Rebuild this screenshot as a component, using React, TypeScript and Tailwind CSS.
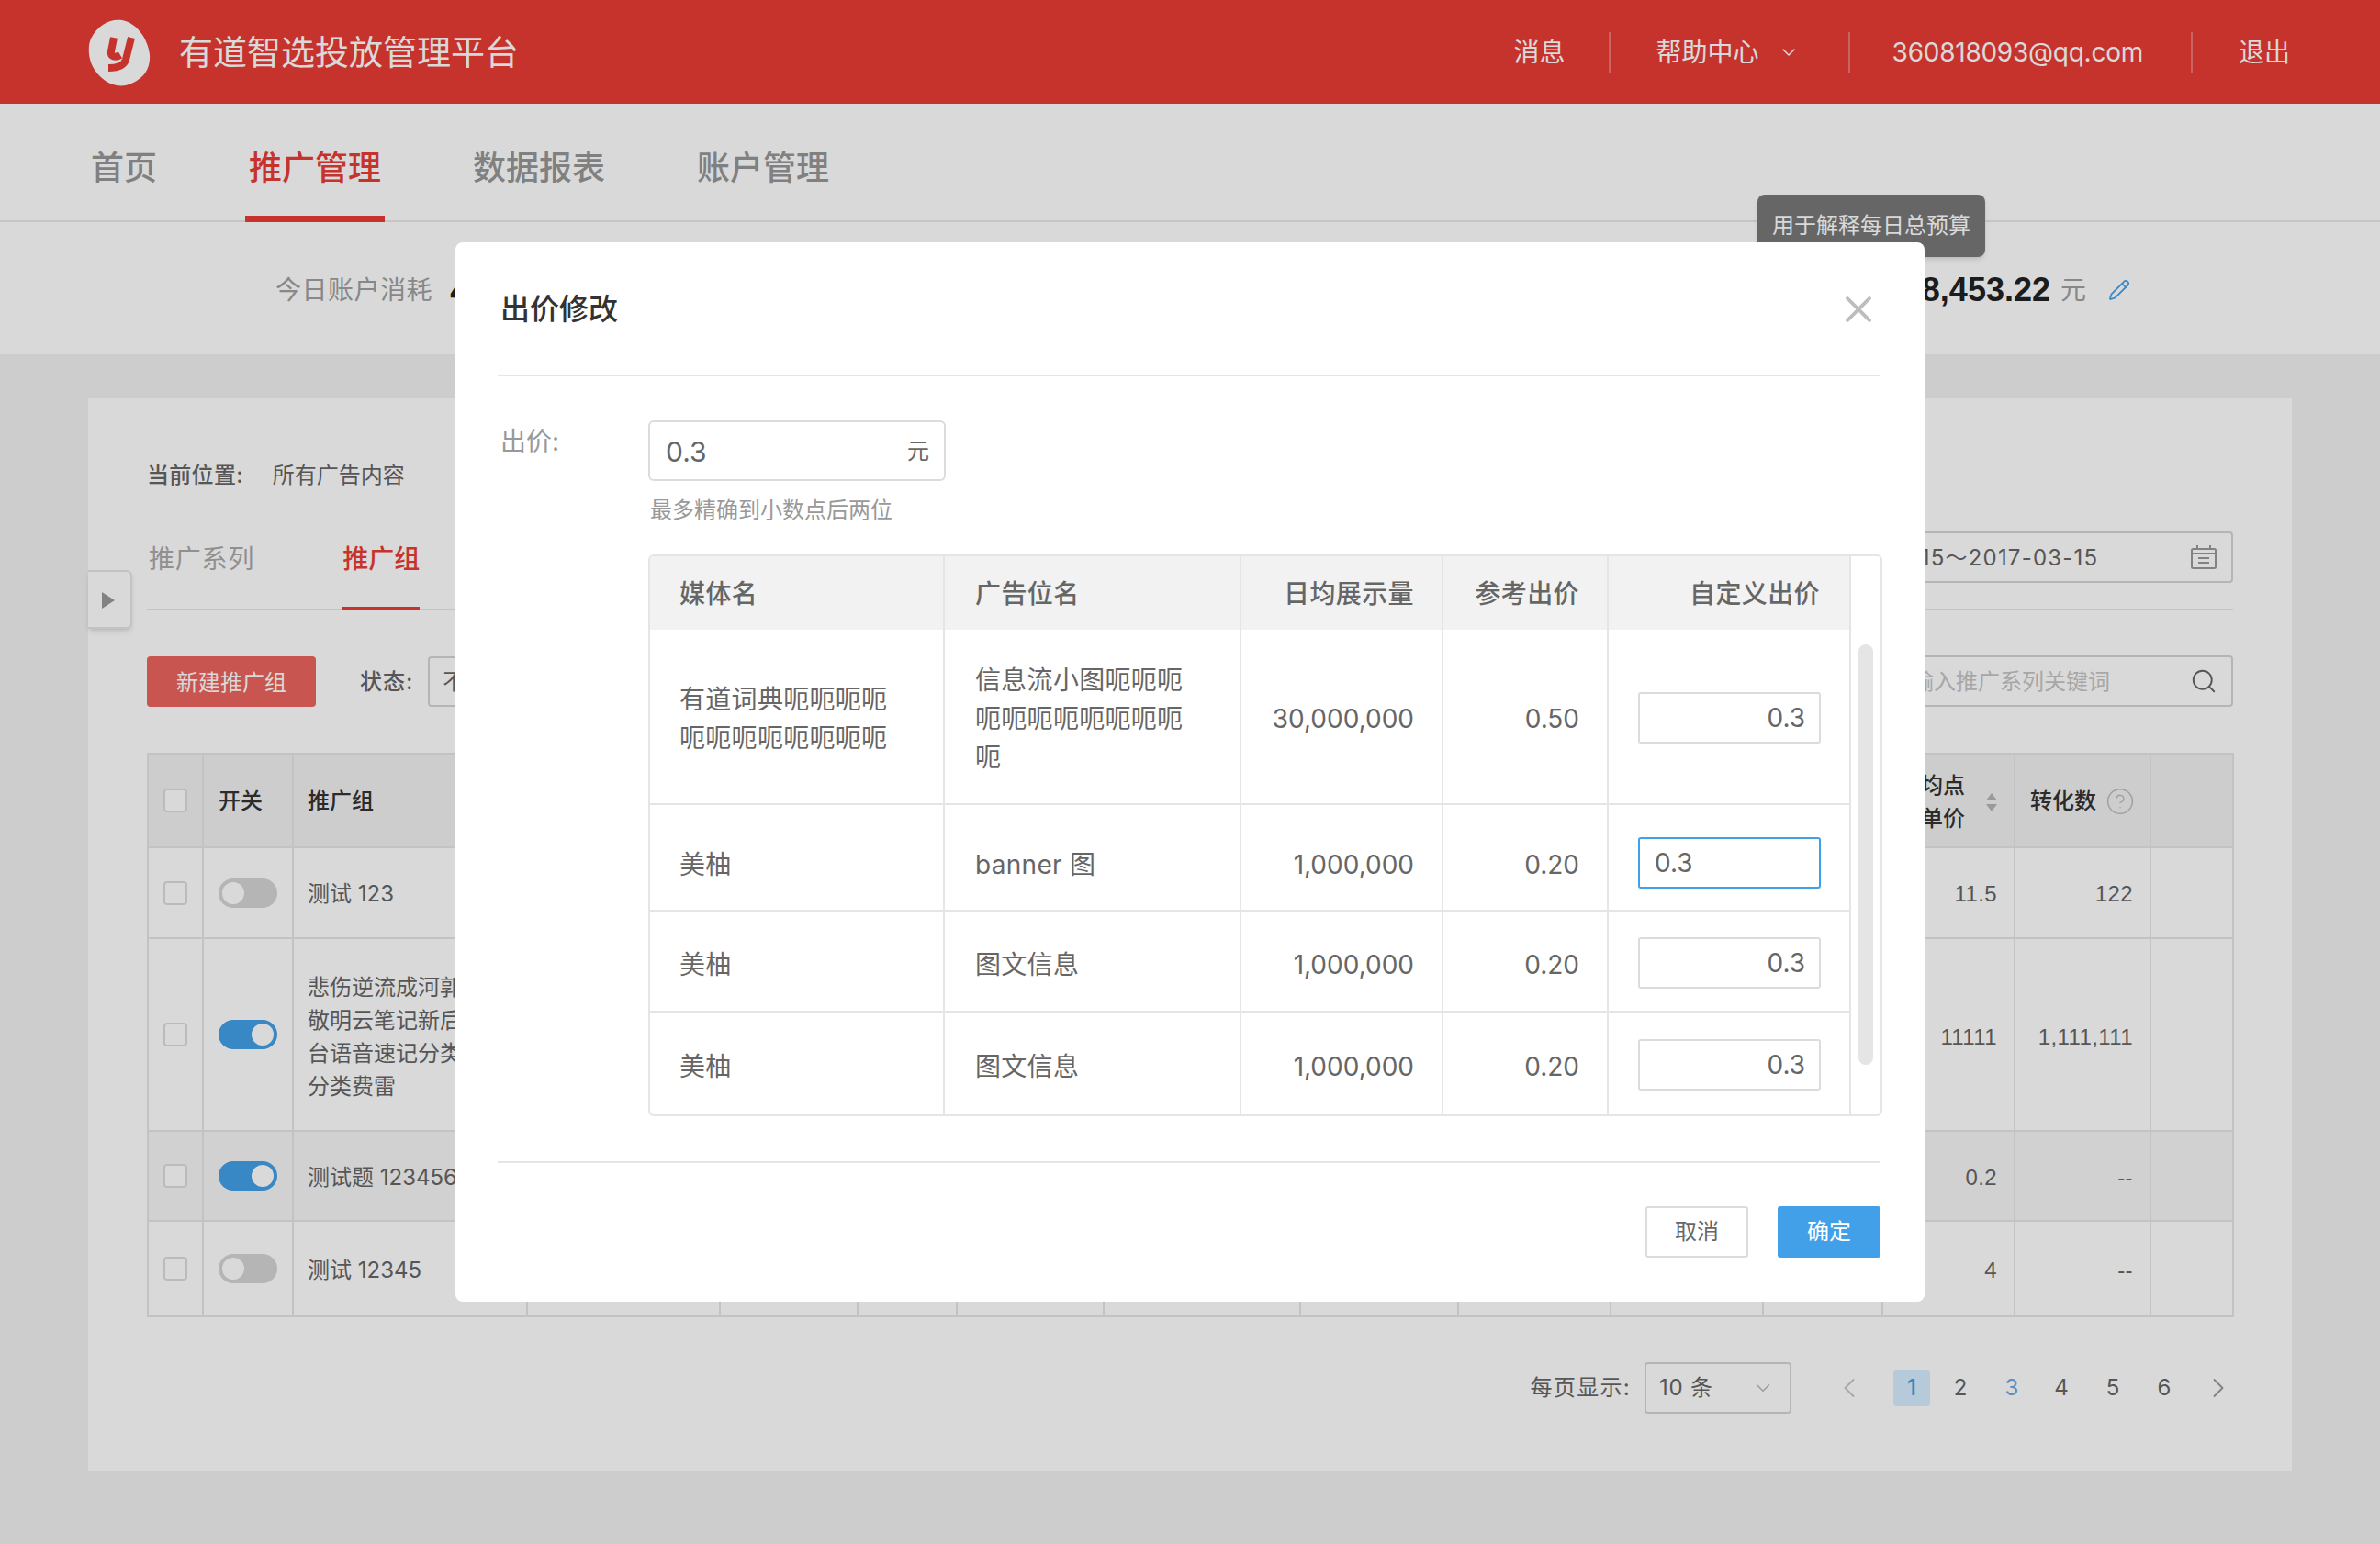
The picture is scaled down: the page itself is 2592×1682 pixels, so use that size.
import { X, ChevronDown, ChevronLeft, ChevronRight, Search, Pencil, CircleHelp } from 'lucide-react'

const navItems = ['首页', '推广管理', '数据报表', '账户管理']

function Logo() {
    return (
        <svg className="w-[74px] h-[78px]" viewBox="0 0 74 78">
            <path d="M6 24C14 8 28 2 40 4C56 7 68 24 70 42C71 58 62 70 44 75C28 78 12 66 6 50C3 41 3 31 6 24Z" fill="#fff" />
            <path d="M31 23L28 38C27 44 33 45 38 42" fill="none" stroke="#e93c34" strokeWidth="8" strokeLinejoin="round" />
            <path d="M50 23L44 47C42 54 34 56 25 56" fill="none" stroke="#e93c34" strokeWidth="8" strokeLinejoin="round" />
        </svg>
    )
}

function TopBar() {
    return (
        <header className="h-[113px] bg-[#e93c34] flex items-center pl-[93px] text-white">
            <Logo />
            <div className="ml-[28px] pt-[2px] text-[37px] leading-none">有道智选投放管理平台</div>
            <div className="ml-auto flex items-center text-[28px] leading-none">
                <span>消息</span>
                <span className="w-[2px] h-[44px] bg-white/30 ml-[47px] mr-[50px]" />
                <span>帮助中心</span>
                <ChevronDown className="w-[24px] h-[24px] ml-[20px]" strokeWidth={1.5} />
                <span className="w-[2px] h-[44px] bg-white/30 ml-[53px] mr-[46px]" />
                <span className="tracking-[-0.25px]">360818093@qq.com</span>
                <span className="w-[2px] h-[44px] bg-white/30 ml-[52px] mr-[50px]" />
                <span className="mr-[98px]">退出</span>
            </div>
        </header>
    )
}

function NavBar() {
    return (
        <nav className="h-[129px] bg-white border-b-2 border-[#e8e8e8] flex pl-[95px] gap-[92px] text-[36px] font-medium text-[#979797]">
            {navItems.map((item) => (
                <div
                    key={item}
                    className={`h-[129px] px-[4px] pt-[48px] leading-[44px] border-b-[7px] ${item === '推广管理' ? 'text-[#e93c34] border-[#e93c34]' : 'border-transparent'}`}
                >
                    {item}
                </div>
            ))}
        </nav>
    )
}

function StatStrip() {
    return (
        <div className="h-[144px] bg-white flex items-center justify-between pl-[300px] pr-[272px] pt-[4px] relative">
            <div className="flex items-center gap-[18px]">
                <span className="text-[28px] text-[#a0a0a0] tracking-[0.5px]">今日账户消耗</span>
                <span className="text-[36px] font-bold text-[#222]">4,453.22</span>
            </div>
            <div className="flex items-center">
                <span className="text-[36px] font-bold text-[#222] [font-family:'Liberation_Sans',sans-serif]">18,453.22</span>
                <span className="text-[28px] text-[#a0a0a0] ml-[11px]">元</span>
                <Pencil className="w-[24px] h-[24px] ml-[24px] text-[#42a0e8]" strokeWidth={1.75} />
            </div>
            {/* Tooltip */}
            <div className="absolute left-[1914px] top-[-30px] w-[248px] h-[68px] rounded-lg bg-[#787878] text-white text-[24px] flex items-center justify-center shadow-md">
                用于解释每日总预算
            </div>
        </div>
    )
}

function Checkbox() {
    return <div className="w-[26px] h-[26px] rounded-[4px] border-2 border-[#dcdcdc] bg-white mx-auto" />
}

function Toggle({ on }: { on?: boolean }) {
    return (
        <div className={`w-[64px] h-[32px] rounded-full flex items-center px-[4px] mx-auto ${on ? 'bg-[#42a0e8] justify-end' : 'bg-[#d5d5d5] justify-start'}`}>
            <div className="w-[24px] h-[24px] rounded-full bg-white" />
        </div>
    )
}

const colWidths = ['w-[60px]', 'w-[98px]', 'w-[255px]', 'w-[210px]', 'w-[150px]', 'w-[108px]', 'w-[160px]', 'w-[214px]', 'w-[172px]', 'w-[166px]', 'w-[166px]', 'w-[130px]', 'w-[144px]', 'w-[148px]', 'w-[90px]']
const hiddenCols = [0, 1, 2, 3, 4, 5, 6, 7, 8]
const cellBorder = 'border-2 border-[#e5e5e5]'
const numberFont = "[font-family:'Liberation_Sans',sans-serif] tracking-[0.4px]"

const groups = [
    { name: ['测试 123'], on: false, price: '11.5', conv: '122', height: 'h-[99px]', pad: 'pt-[3px]' },
    { name: ['悲伤逆流成河郭', '敬明云笔记新后', '台语音速记分类', '分类费雷'], on: true, price: '11111', conv: '1,111,111', height: 'h-[210px]', pad: 'pt-[5px]' },
    { name: ['测试题 123456'], on: true, price: '0.2', conv: '--', height: 'h-[98px]', pad: 'pt-[3px]', hover: true },
    { name: ['测试 12345'], on: false, price: '4', conv: '--', height: 'h-[104px]', pad: 'pt-[4px]' },
]

function GroupTable() {
    return (
        <table className="table-fixed border-collapse w-[2271px] mt-[50px] text-[24px] text-[#666]">
            <colgroup>
                {colWidths.map((w, i) => (
                    <col key={i} className={w} />
                ))}
            </colgroup>
            <thead>
                <tr className="h-[102px] bg-[#f1f1f1] text-[#333] font-medium">
                    <th className={cellBorder}><Checkbox /></th>
                    <th className={`${cellBorder} text-left pl-[16px] pt-[2px] font-medium`}>开关</th>
                    <th className={`${cellBorder} text-left pl-[15px] pt-[2px] font-medium`}>推广组</th>
                    {hiddenCols.map((c) => (
                        <th key={c} className={cellBorder} />
                    ))}
                    <th className={`${cellBorder} text-left pl-[17px] pt-[4px] font-medium leading-[36px]`}>
                        <div className="flex items-center">
                            <div>平均点<br />击单价</div>
                            <svg className="w-[12px] h-[20px] ml-[23px]" viewBox="0 0 12 20">
                                <path d="M6 0L12 8H0Z M0 12H12L6 20Z" fill="#b5b5b5" />
                            </svg>
                        </div>
                    </th>
                    <th className={`${cellBorder} text-left pl-[16px] pt-[2px] font-medium`}>
                        <div className="flex items-center gap-[10px]">
                            转化数
                            <CircleHelp className="w-[32px] h-[32px] text-[#bdbdbd]" strokeWidth={1.1} />
                        </div>
                    </th>
                    <th className={cellBorder} />
                </tr>
            </thead>
            <tbody>
                {groups.map((g, i) => (
                    <tr key={i} className={`${g.height} ${g.hover ? 'bg-[#f6f6f6]' : ''}`}>
                        <td className={cellBorder}><Checkbox /></td>
                        <td className={cellBorder}><Toggle on={g.on} /></td>
                        <td className={`${cellBorder} ${g.pad} pl-[15px] leading-[36px] whitespace-nowrap overflow-hidden`}>
                            {g.name.map((line) => (
                                <div key={line}>{line}</div>
                            ))}
                        </td>
                        {hiddenCols.map((c) => (
                            <td key={c} className={cellBorder} />
                        ))}
                        <td className={`${cellBorder} ${g.pad} ${numberFont} text-right pr-[18px]`}>{g.price}</td>
                        <td className={`${cellBorder} ${g.pad} ${numberFont} text-right pr-[18px]`}>{g.conv}</td>
                        <td className={cellBorder} />
                    </tr>
                ))}
            </tbody>
        </table>
    )
}

function Pagination() {
    return (
        <div className="flex items-center justify-end mt-[49px] -mr-[2px] text-[24px] text-[#666]">
            <span className="tracking-[1.3px]">每页显示:</span>
            <div className="ml-[15px] w-[160px] h-[56px] border-2 border-[#d5d5d5] rounded-[4px] flex items-center justify-between pl-[14px] pr-[16px] bg-white">
                <span className="tracking-[0.8px]">10 条</span>
                <ChevronDown className="w-[26px] h-[26px] text-[#b5b5b5]" strokeWidth={1.25} />
            </div>
            <ChevronLeft className="w-[36px] h-[36px] ml-[45px] text-[#c5c5c5]" strokeWidth={1.25} />
            <div className="ml-[30px] w-[40px] h-[40px] rounded-[4px] bg-[#d7eeff] text-[#42a0e8] font-medium flex items-center justify-center">1</div>
            <div className="ml-[13px] w-[40px] text-center">2</div>
            <div className="ml-[16px] w-[40px] text-center text-[#6ba8e0]">3</div>
            <div className="ml-[14px] w-[40px] text-center">4</div>
            <div className="ml-[16px] w-[40px] text-center">5</div>
            <div className="ml-[16px] w-[40px] text-center">6</div>
            <ChevronRight className="w-[36px] h-[36px] ml-[21px] text-[#999]" strokeWidth={1.25} />
        </div>
    )
}

function MainCard() {
    return (
        <section className="relative mx-[96px] mt-[48px] h-[1168px] bg-white px-[64px] pt-[66px]">
            {/* Side panel handle */}
            <div className="absolute left-0 top-[187px] w-[48px] h-[64px] bg-white border-2 border-l-0 border-[#e5e5e5] rounded-r-md shadow-md flex items-center justify-center pt-[2px] pr-[2px]">
                <div className="w-0 h-0 border-y-[9px] border-y-transparent border-l-[14px] border-l-[#999]" />
            </div>

            <div className="flex items-center text-[24px] leading-[36px] text-[#666]">
                <span className="font-medium tracking-[0.3px]">当前位置:</span>
                <span className="ml-[32px]">所有广告内容</span>
            </div>

            <div className="h-[129px] border-b-2 border-[#e5e5e5] flex justify-between">
                <div className="flex gap-[96px] text-[28px] self-end -mb-[2px]">
                    <div className="text-[#aaa] pl-[2px] pt-[4px] pb-[33px] h-[80px] leading-[40px] tracking-[0.8px]">推广系列</div>
                    <div className="text-[#e93c34] font-medium pb-[33px] pt-[4px] h-[80px] leading-[40px] border-b-4 border-[#e93c34]">推广组</div>
                </div>
                <div className="mt-[43px] w-[471px] h-[56px] border-2 border-[#d5d5d5] rounded-[4px] bg-white flex items-center justify-between pl-[14px] pr-[16px] text-[24px] text-[#666] tracking-[1.2px]">
                    <span className="pt-[2px]">2017-03-15～2017-03-15</span>
                    <svg className="w-[28px] h-[26px]" viewBox="0 0 28 26" fill="none" stroke="#999" strokeWidth="2">
                        <rect x="1" y="4" width="26" height="21" rx="1.5" />
                        <path d="M1 9H27M7 0V5M21 0V5M8 14H20M8 19H20" />
                    </svg>
                </div>
            </div>

            <div className="flex items-center mt-[49px] text-[24px] text-[#666]">
                <button className="w-[184px] h-[55px] pt-[3px] rounded-[4px] bg-[#ec645d] text-white">新建推广组</button>
                <span className="ml-[48px] pt-[2px] font-medium tracking-[1px]">状态:</span>
                <div className="ml-[16px] w-[200px] h-[55px] border-2 border-[#d5d5d5] rounded-[4px] bg-white flex items-center pl-[14px] pt-[2px]">不限</div>
                <div className="ml-auto w-[390px] h-[56px] border-2 border-[#d5d5d5] rounded-[4px] bg-white flex items-center justify-between pl-[14px] pr-[15px] text-[#c5c5c5]">
                    <span className="pt-[2px]">请输入推广系列关键词</span>
                    <Search className="w-[30px] h-[30px] text-[#666]" strokeWidth={1.5} />
                </div>
            </div>

            <GroupTable />
            <Pagination />
        </section>
    )
}

const mediaRows = [
    { media: ['有道词典呃呃呃呃', '呃呃呃呃呃呃呃呃'], slot: ['信息流小图呃呃呃', '呃呃呃呃呃呃呃呃', '呃'], views: '30,000,000', ref: '0.50', height: 'h-[190px]', textPad: 'pt-[4px]', inputPad: 'pt-[2px]' },
    { media: ['美柚'], slot: ['banner 图'], views: '1,000,000', ref: '0.20', height: 'h-[116px]', textPad: 'pt-[15px]', inputPad: 'pt-[11px]', focus: true },
    { media: ['美柚'], slot: ['图文信息'], views: '1,000,000', ref: '0.20', height: 'h-[110px]', textPad: 'pt-[8px]', inputPad: 'pt-[4px]' },
    { media: ['美柚'], slot: ['图文信息'], views: '1,000,000', ref: '0.20', height: 'h-[112px]', textPad: 'pt-[6px]', inputPad: 'pt-[3px]' },
]

const modalCell = 'border-r-2 border-[#e5e5e5]'

function BidTable() {
    return (
        <div className="mt-[30px] ml-[164px] w-[1344px] border-2 border-[#e5e5e5] rounded-md flex overflow-hidden">
            <table className="table-fixed border-collapse w-[1307px] text-[28px] text-[#666]">
                <colgroup>
                    <col className="w-[320px]" />
                    <col className="w-[323px]" />
                    <col className="w-[220px]" />
                    <col className="w-[180px]" />
                    <col className="w-[264px]" />
                </colgroup>
                <thead>
                    <tr className="h-[80px] bg-[#f2f2f2] tracking-[0.4px]">
                        <th className={`${modalCell} font-medium text-left pl-[32px] pt-[2px]`}>媒体名</th>
                        <th className={`${modalCell} font-medium text-left pl-[33px] pt-[2px]`}>广告位名</th>
                        <th className={`${modalCell} font-medium text-right pr-[30px] pt-[2px]`}>日均展示量</th>
                        <th className={`${modalCell} font-medium text-right pr-[30px] pt-[2px]`}>参考出价</th>
                        <th className={`${modalCell} font-medium text-right pr-[32px] pt-[2px]`}>自定义出价</th>
                    </tr>
                </thead>
                <tbody>
                    {mediaRows.map((row, i) => (
                        <tr key={i} className={`${row.height} ${i > 0 ? 'border-t-2 border-[#e5e5e5]' : ''}`}>
                            <td className={`${modalCell} ${row.textPad} pl-[32px] leading-[42px] tracking-[0.3px]`}>
                                {row.media.map((line) => (
                                    <div key={line}>{line}</div>
                                ))}
                            </td>
                            <td className={`${modalCell} ${row.textPad} pl-[33px] leading-[42px] tracking-[0.3px]`}>
                                {row.slot.map((line) => (
                                    <div key={line}>{line}</div>
                                ))}
                            </td>
                            <td className={`${modalCell} ${row.textPad} text-right pr-[30px]`}>{row.views}</td>
                            <td className={`${modalCell} ${row.textPad} text-right pr-[30px]`}>{row.ref}</td>
                            <td className={`${modalCell} ${row.inputPad} pl-[32px]`}>
                                <input
                                    readOnly
                                    value="0.3"
                                    className={`block w-[199px] h-[56px] rounded-[3px] border-2 pl-[16px] pr-[15px] outline-none ${row.focus ? 'border-[#42a0e8] text-left' : 'border-[#dcdcdc] text-right'}`}
                                />
                            </td>
                        </tr>
                    ))}
                </tbody>
            </table>
            {/* Scrollbar */}
            <div className="flex-1 px-[8px] pt-[96px]">
                <div className="h-[458px] rounded-full bg-[#e5e5e5]" />
            </div>
        </div>
    )
}

function BidModal() {
    return (
        <div className="absolute inset-0 bg-black/15 flex justify-center items-start pt-[264px]">
            <div className="w-[1600px] h-[1154px] bg-white rounded-lg px-[48px] pl-[46px]">
                <div className="h-[146px] border-b-2 border-[#e5e5e5] flex items-center justify-between pl-[3px] pt-[2px]">
                    <h2 className="text-[32px] font-medium text-[#333]">出价修改</h2>
                    <X className="w-[48px] h-[48px] text-[#bdbdbd]" strokeWidth={1.9} />
                </div>

                <div className="flex mt-[48px] text-[#999]">
                    <div className="w-[164px] pl-[3px] text-[28px] leading-[36px] mt-[5px]">出价:</div>
                    <div className="w-[324px] h-[66px] border-2 border-[#dcdcdc] rounded-md flex items-center justify-between pl-[17px] pr-[16px] pt-[2px]">
                        <span className="text-[30px] text-[#666]">0.3</span>
                        <span className="text-[24px] text-[#666]">元</span>
                    </div>
                </div>
                <div className="ml-[166px] mt-[14px] text-[24px] leading-[36px] text-[#999]">最多精确到小数点后两位</div>

                <BidTable />

                <div className="mt-[49px] border-t-2 border-[#e5e5e5] pt-[47px] flex justify-end gap-[32px] text-[24px]">
                    <button className="w-[112px] h-[56px] border-2 border-[#dcdcdc] rounded-[3px] text-[#666]">取消</button>
                    <button className="w-[112px] h-[56px] rounded-[3px] bg-[#42a0e8] text-white">确定</button>
                </div>
            </div>
        </div>
    )
}

export default function App() {
    return (
        <div className="relative w-[2592px] h-[1682px] overflow-hidden bg-[#f1f1f1] [font-family:Inter,'Noto_Sans_CJK_SC',sans-serif]">
            <TopBar />
            <NavBar />
            <StatStrip />
            <MainCard />
            <BidModal />
        </div>
    )
}
